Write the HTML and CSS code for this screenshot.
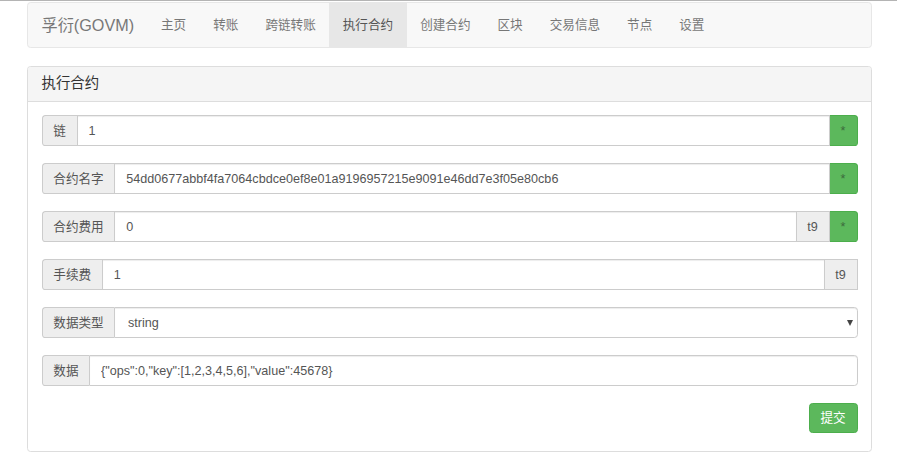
FILE: index.html
```html
<!DOCTYPE html>
<html lang="zh-CN">
<head>
<meta charset="utf-8">
<title>执行合约</title>
<link rel="stylesheet" href="styles.css">
</head>
<body>
<div class="page">
  <nav class="navbar">
    <a class="brand">孚衍(GOVM)</a>
    <ul class="nav">
      <li><a>主页</a></li>
      <li><a>转账</a></li>
      <li><a>跨链转账</a></li>
      <li class="active"><a>执行合约</a></li>
      <li><a>创建合约</a></li>
      <li><a>区块</a></li>
      <li><a>交易信息</a></li>
      <li><a>节点</a></li>
      <li><a>设置</a></li>
    </ul>
  </nav>

  <div class="panel">
    <div class="panel-heading">执行合约</div>
    <div class="panel-body">
      <div class="input-group">
        <span class="addon">链</span>
        <input class="control" type="text" value="1">
        <span class="addon addon-req">*</span>
      </div>
      <div class="input-group">
        <span class="addon">合约名字</span>
        <input class="control" type="text" value="54dd0677abbf4fa7064cbdce0ef8e01a9196957215e9091e46dd7e3f05e80cb6">
        <span class="addon addon-req">*</span>
      </div>
      <div class="input-group">
        <span class="addon">合约费用</span>
        <input class="control" type="text" value="0">
        <span class="addon addon-unit">t9</span>
        <span class="addon addon-req">*</span>
      </div>
      <div class="input-group">
        <span class="addon">手续费</span>
        <input class="control" type="text" value="1">
        <span class="addon addon-unit">t9</span>
      </div>
      <div class="input-group">
        <span class="addon">数据类型</span>
        <div class="select-wrap">
          <select class="control select">
            <option>string</option>
          </select>
        </div>
      </div>
      <div class="input-group">
        <span class="addon">数据</span>
        <input class="control" type="text" value='{"ops":0,"key":[1,2,3,4,5,6],"value":45678}'>
      </div>
      <div class="actions">
        <button class="btn-success" type="button">提交</button>
      </div>
    </div>
  </div>
</div>
</body>
</html>
```

FILE: styles.css
```css
* { box-sizing: border-box; }

html, body {
  margin: 0;
  padding: 0;
  background: #fff;
}

body {
  border-top: 1px solid #b4b4b4;
  font-family: "Liberation Sans", "Noto Sans CJK SC", Arial, sans-serif;
  font-size: 12.6px;
  line-height: 18px;
  color: #333;
}

.page {
  width: 845px;
  margin-left: 27px;
  padding-top: 1px;
}

/* ---------- navbar ---------- */
.navbar {
  display: flex;
  align-items: stretch;
  height: 46px;
  background: #f8f8f8;
  border: 1px solid #e7e7e7;
  border-radius: 3.6px;
  margin-bottom: 18px;
}

.brand {
  flex: 0 0 119.5px;
  display: flex;
  align-items: center;
  padding-left: 13.5px;
  font-size: 16.2px;
  color: #777;
  white-space: nowrap;
}

.nav {
  display: flex;
  list-style: none;
  margin: 0;
  padding: 0;
}

.nav li {
  display: flex;
}

.nav a {
  display: flex;
  align-items: center;
  padding: 0 13.5px;
  color: #777;
  white-space: nowrap;
}

.nav li.active a {
  background: #e7e7e7;
  color: #555;
}

/* ---------- panel ---------- */
.panel {
  border: 1px solid #ddd;
  border-radius: 3.6px;
  background: #fff;
}

.panel-heading {
  background: #f5f5f5;
  border-bottom: 1px solid #ddd;
  border-radius: 3px 3px 0 0;
  padding: 9px 13.5px;
  font-size: 14.4px;
  line-height: 15.8px;
  color: #333;
}

.panel-body {
  padding: 13.5px 13.5px 18px;
}

/* ---------- input groups ---------- */
.input-group {
  display: flex;
  height: 30.6px;
  margin-bottom: 17.4px;
}

.addon {
  display: flex;
  align-items: center;
  justify-content: center;
  flex: 0 0 auto;
  padding: 0 10.8px;
  background: #eee;
  border: 1px solid #ccc;
  color: #555;
  white-space: nowrap;
}

.addon:first-child {
  border-right: 0;
  border-radius: 3.6px 0 0 3.6px;
}

.addon-unit {
  border-left: 0;
  width: 33px;
  padding: 0;
}

.addon-req {
  width: 28px;
  padding: 0;
  align-items: flex-start;
  padding-top: 6px;
  background: #5cb85c;
  border-color: #4cae4c;
  border-left: 0;
  color: #3d6b3d;
  border-radius: 0 3.6px 3.6px 0;
}

.control {
  flex: 1 1 auto;
  min-width: 0;
  height: 100%;
  margin: 0;
  padding: 0 10.8px;
  border: 1px solid #ccc;
  border-radius: 0;
  background: #fff;
  font: inherit;
  color: #555;
  box-shadow: inset 0 1px 1px rgba(0, 0, 0, 0.075);
  outline: none;
}

.input-group > .control:last-child,
.select-wrap:last-child .control {
  border-radius: 0 3.6px 3.6px 0;
}

.select-wrap {
  position: relative;
  flex: 1 1 auto;
  display: flex;
}

.select {
  -webkit-appearance: none;
  appearance: none;
  width: 100%;
  padding-left: 12.6px;
}

.select-wrap::after {
  content: "";
  position: absolute;
  right: 5px;
  top: 13px;
  width: 0;
  height: 0;
  border-left: 3.5px solid transparent;
  border-right: 3.5px solid transparent;
  border-top: 6px solid #444;
  pointer-events: none;
}

/* ---------- actions ---------- */
.actions {
  display: flex;
  justify-content: flex-end;
}

.btn-success {
  height: 30px;
  padding: 0 10.8px;
  background: #5cb85c;
  border: 1px solid #4cae4c;
  border-radius: 3.6px;
  color: #fff;
  font: inherit;
  cursor: pointer;
}
```
